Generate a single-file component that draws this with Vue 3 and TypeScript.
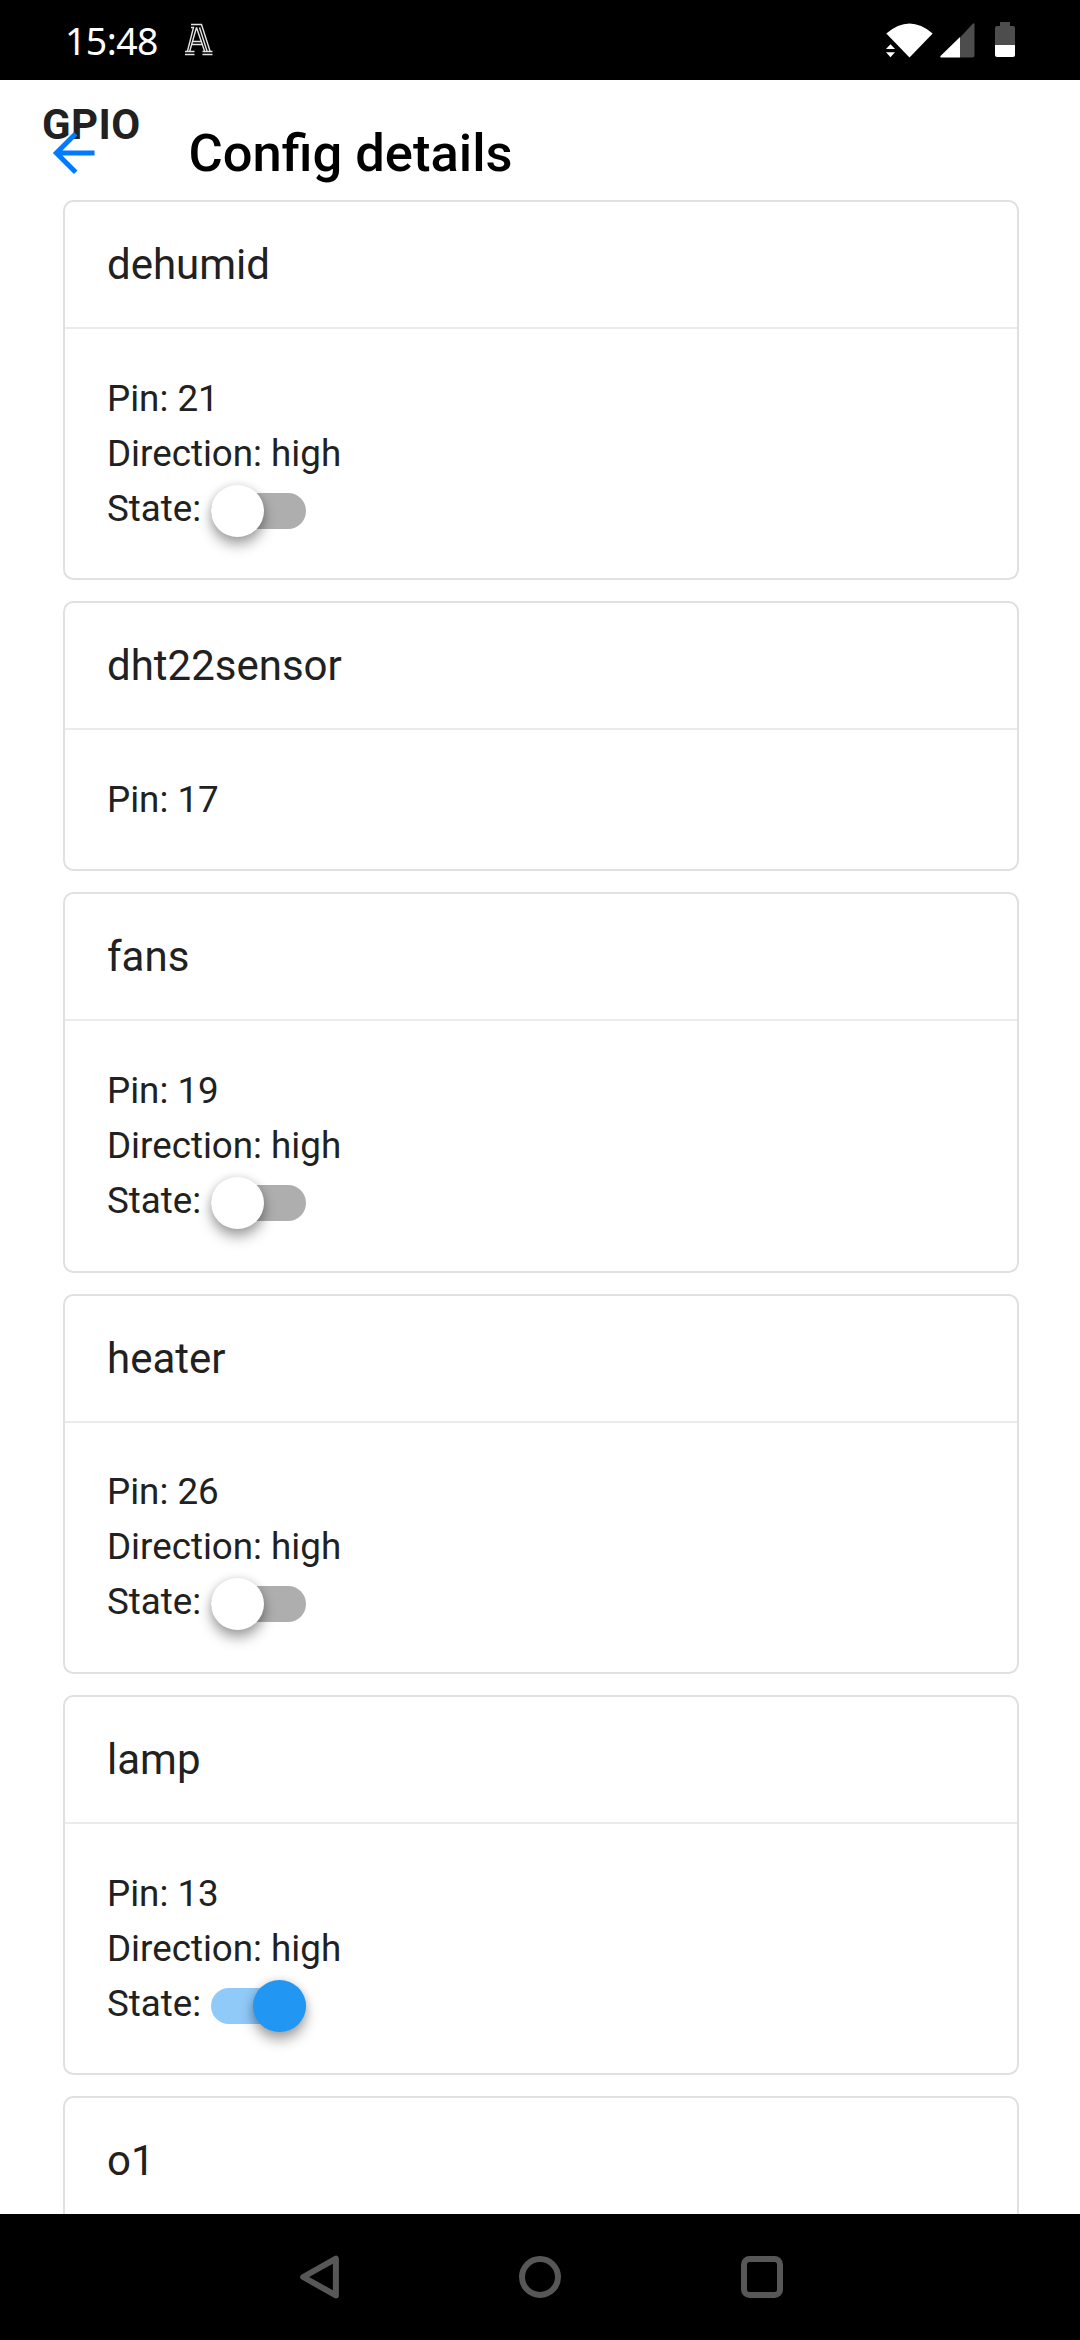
<script setup lang="ts">
import { ref } from 'vue'

interface Device {
  name: string
  pin: number
  direction?: string
  on?: boolean
}

const devices = ref<Device[]>([
  { name: 'dehumid', pin: 21, direction: 'high', on: false },
  { name: 'dht22sensor', pin: 17 },
  { name: 'fans', pin: 19, direction: 'high', on: false },
  { name: 'heater', pin: 26, direction: 'high', on: false },
  { name: 'lamp', pin: 13, direction: 'high', on: true },
  { name: 'o1', pin: 0 },
])

function toggle(device: Device) {
  device.on = !device.on
}
</script>

<template>
  <div class="phone">
    <div class="status">
      <span class="time">15:48</span>
      <svg class="notif" width="30" height="34" viewBox="0 0 30 34" fill="none" stroke="#e4e4e4" stroke-width="1.4">
        <path d="M7 1.5H17.5L26 28M7 4.5H9.5L3.5 28M12.5 4.5L5.8 28M12.5 4.5L20.5 28M15.5 4.5L23 28M9 18.5H18M8.3 21.5H19M1 28.5H10.500M1 31.500H10.500M18.500 28.500H28.500M18.500 31.500H28.500" />
      </svg>
      <svg class="signals" width="132" height="38" viewBox="0 0 132 38">
        <path d="M0.300 11.500Q23.500 -8.500 46.700 11.500L23.500 35.500Z" fill="#fff" />
        <path d="M0 27L4.500 22.300L9 27ZM0 30.300H9L4.500 35.200Z" fill="#fff" />
        <path d="M74 15.500L87 1.600Q88.500 .8 88.500 2.500V33.500Q88.500 35.500 86.500 35.500H74Z" fill="#4d4d4d" />
        <path d="M74 15V35.500H55Q53.600 35.200 54.500 34Z" fill="#fff" />
        <path d="M114 0H124V4H127Q129 4 129 6V23H109V6Q109 4 111 4H114Z" fill="#4d4d4d" />
        <path d="M109 23H129V33Q129 35 127 35H111Q109 35 109 33Z" fill="#fff" />
      </svg>
    </div>

    <main class="screen">
      <header class="appbar">
        <svg class="back" width="44" height="44" viewBox="0 0 44 44" fill="none" stroke="#007aff" stroke-width="5">
          <path d="M4 22H42.500M23.700 2.700L4.400 22L23.700 41.300" />
        </svg>
        <span class="title">Config details</span>
      </header>
      <h1 class="section">GPIO</h1>
      <div class="list">
        <section v-for="d in devices" :key="d.name" class="card">
          <h2 class="card-title">{{ d.name }}</h2>
          <div v-if="d.pin" class="card-body">
            <div class="line">Pin: {{ d.pin }}</div>
            <template v-if="d.direction">
              <div class="line">Direction: {{ d.direction }}</div>
              <div class="line state">
                <span>State:</span>
                <span class="switch" :class="{ on: d.on }" role="switch" :aria-checked="d.on" @click="toggle(d)">
                  <span class="knob"></span>
                </span>
              </div>
            </template>
          </div>
        </section>
      </div>
    </main>

    <nav class="nav">
      <svg width="44" height="44" viewBox="0 0 44 44"><path d="M7.200 22L39.900 3.600V40.400Z" /></svg>
      <svg width="44" height="44" viewBox="0 0 44 44"><circle cx="22" cy="22" r="18" /></svg>
      <svg width="44" height="44" viewBox="0 0 44 44"><rect x="4" y="4" width="36" height="36" rx="5.500" /></svg>
    </nav>
  </div>
</template>

<style>
body {
  margin: 0;
  background: #fff;
}
</style>

<style scoped>
.phone {
  width: 1080px;
  height: 2340px;
  display: flex;
  flex-direction: column;
  overflow: hidden;
  background: #fff;
  color: #212121;
  font-family: Roboto, sans-serif;
}
.status {
  flex: none;
  height: 80px;
  box-sizing: border-box;
  display: flex;
  align-items: flex-start;
  padding: 22px 62px 0 65px;
  background: #000;
}
.time {
  width: 92px;
  margin-top: -6px;
  font: 400 37.500px/50px 'Noto Sans', sans-serif;
  letter-spacing: -0.6px;
  white-space: nowrap;
  color: #fff;
}
.notif {
  margin: 1px 0 0 27px;
}
.signals {
  margin-left: auto;
  overflow: visible;
}
.screen {
  position: relative;
  flex: 1;
  min-height: 0;
  overflow: hidden;
}
.appbar {
  position: absolute;
  top: 0;
  left: 0;
  right: 0;
  height: 146px;
  display: flex;
  align-items: center;
  padding-left: 52px;
}
.back {
  flex: none;
}
.title {
  margin: -1px 0 0 92.500px;
  font-size: 52.500px;
  font-weight: 500;
  line-height: 62px;
  color: #000;
}
.section {
  margin: 0;
  padding: 20px 42px 0;
  height: 99.760px;
  font-size: 42px;
  font-weight: 700;
  line-height: 50px;
  letter-spacing: 0.4px;
}
.list {
  display: flex;
  flex-direction: column;
  gap: 21px;
  padding: 0 61px 0 63px;
}
.card {
  border: 2px solid #e0e0e0;
  border-radius: 10.500px;
}
.card-title {
  margin: 0;
  height: 125px;
  padding-left: 42px;
  border-bottom: 2px solid #ebebeb;
  font-size: 42px;
  font-weight: 400;
  line-height: 125px;
}
.card-body {
  padding: 41.800px 42px 42.500px;
  font-size: 36.750px;
  line-height: 55px;
}
.line {
  height: 55px;
}
.state {
  display: flex;
  align-items: flex-start;
}
.switch {
  position: relative;
  width: 95px;
  height: 36px;
  margin: 12px 0 0 10px;
  border-radius: 18px;
  background: #aeaeae;
}
.knob {
  position: absolute;
  top: -8px;
  left: 0;
  width: 53px;
  height: 52px;
  border-radius: 50%;
  background: #fff;
  box-shadow: 0 8px 13px rgba(0, 0, 0, 0.34), 0 0 8px rgba(0, 0, 0, 0.13);
}
.switch.on {
  background: #90caf9;
}
.switch.on .knob {
  left: 42px;
  background: #2196f3;
}
.nav {
  flex: none;
  height: 126px;
  display: flex;
  justify-content: center;
  align-items: center;
  gap: 178px;
  background: #000;
}
.nav svg {
  fill: none;
  stroke: #575757;
  stroke-width: 6;
  stroke-linejoin: round;
}
</style>
